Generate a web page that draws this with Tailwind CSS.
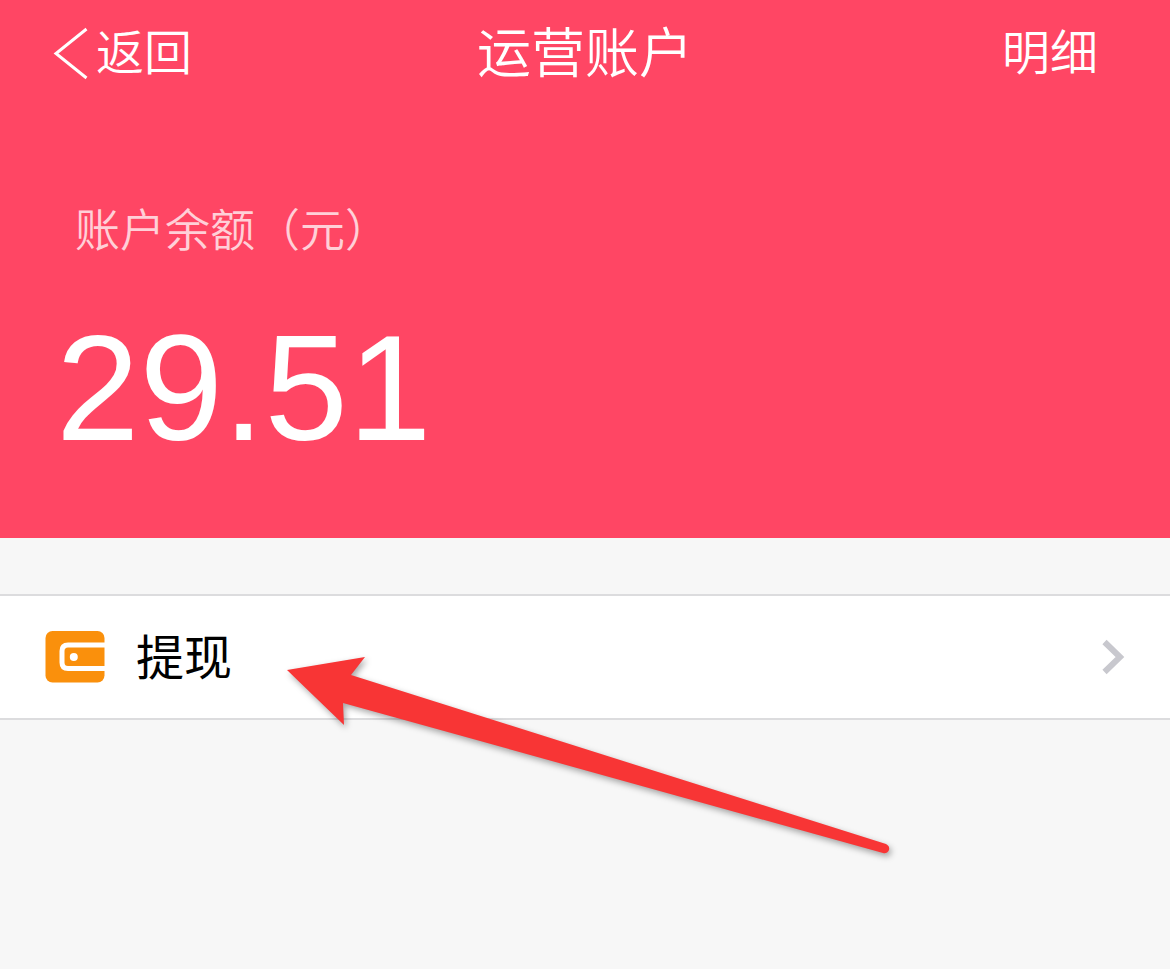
<!DOCTYPE html>
<html lang="zh-CN">
<head>
    <meta charset="UTF-8" />
    <meta name="viewport" content="width=device-width, initial-scale=1.0" />
    <title>运营账户</title>
    <script src="https://cdn.jsdelivr.net/npm/@tailwindcss/browser@4"></script>
</head>
<body class="relative bg-[#f7f7f7] min-h-screen overflow-x-hidden font-['Liberation_Sans','Noto_Sans_CJK_SC',sans-serif]">
<header class="bg-[#ff4664] text-white pb-[72px]">
    <!-- 导航栏 -->
    <nav class="grid grid-cols-[1fr_auto_1fr] items-center h-27 px-13 font-[350]">
        <a href="#" class="flex items-center gap-2 text-[48px] leading-none">
            <svg class="w-9 h-14" viewBox="0 0 36 56" fill="none" stroke="currentColor" stroke-width="3">
                <path d="M34.500 3L4 27.500L34.500 52"/>
            </svg>
            <span>返回</span>
        </a>
        <h1 class="text-[54px] leading-none font-[350]">运营账户</h1>
        <a href="#" class="justify-self-end pr-5 text-[48px] leading-none">明细</a>
    </nav>

    <!-- 账户余额 -->
    <section class="pt-[94px]">
        <p class="pl-[75px] text-[45px] leading-[60px] font-[350] text-white/75">账户余额（元）</p>
        <p class="pl-14 mt-12 text-[150px] leading-[156px]">29.51</p>
    </section>
</header>

<main class="pt-14">
    <a href="#" class="flex items-center h-[126px] pl-[45px] pr-11 bg-white border-y-2 border-[#dcdcde]">
        <svg class="w-[60px] h-[52px]" viewBox="0 0 60 52">
            <rect x="0.5" y="0" width="59" height="51.500" rx="7" fill="#fa900c"/>
            <path d="M60 14H23Q17 14 17 20V31.500Q17 37.500 23 37.500H60" fill="none" stroke="#fff" stroke-width="5"/>
            <circle cx="28.800" cy="26" r="4" fill="#fff"/>
        </svg>
        <span class="ml-[31px] pt-1 text-[48px] leading-none text-black">提现</span>
        <svg class="ml-auto w-6 h-9" viewBox="0 0 24 36" fill="none" stroke="#c8c8ce" stroke-width="6">
            <path d="M2.500 3L18 18L2.500 33"/>
        </svg>
    </a>
</main>

<!-- 指示箭头 -->
<svg class="absolute left-[280px] top-[650px] w-[620px] h-[215px] pointer-events-none drop-shadow-[2px_3px_3px_rgba(0,0,0,0.35)]" viewBox="280 650 620 215" aria-hidden="true">
    <path fill="#f83535" d="M287 670L365 657L351 675L886 844Q890 846 889 850Q887 854 883 853L343 703L344 725Z"/>
</svg>
</body>
</html>
